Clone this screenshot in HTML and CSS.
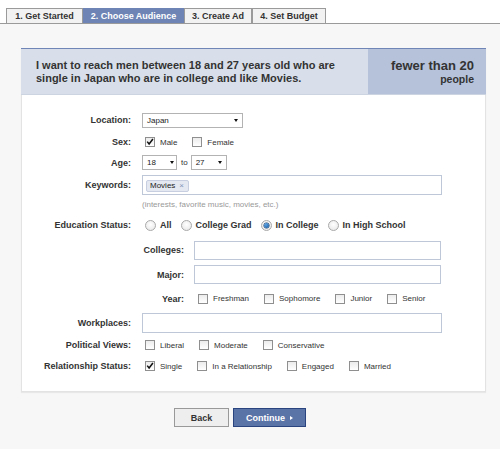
FILE: index.html
```html
<!DOCTYPE html>
<html>
<head>
<meta charset="utf-8">
<link rel="stylesheet" href="styles.css">
</head>
<body>
<div class="tabbar">
  <div class="tab tab-1">1. Get Started</div>
  <div class="tab tab-2 active">2. Choose Audience</div>
  <div class="tab tab-3">3. Create Ad</div>
  <div class="tab tab-4">4. Set Budget</div>
</div>
<main class="page">
  <section class="panel">
    <div class="summary">
      <p class="summary-text">I want to reach men between 18 and 27 years old who are<br>single in Japan who are in college and like Movies.</p>
      <div class="estimate">
        <div class="est-num">fewer than 20</div>
        <div class="est-unit">people</div>
      </div>
    </div>
    <div class="form">
      <div class="row h22">
        <div class="label">Location:</div>
        <div class="field">
          <div class="select sel-loc"><span>Japan</span><i class="arrow"></i></div>
        </div>
      </div>
      <div class="row h22">
        <div class="label">Sex:</div>
        <div class="field options">
          <label class="opt"><span class="cb"><svg viewBox="0 0 10 10" width="10" height="10"><path d="M2.2 4.6 L4.1 7 L7.9 2" fill="none" stroke="#111" stroke-width="1.5"/></svg></span>Male</label>
          <label class="opt"><span class="cb"></span>Female</label>
        </div>
      </div>
      <div class="row h19">
        <div class="label">Age:</div>
        <div class="field">
          <div class="select sel-age1"><span>18</span><i class="arrow"></i></div>
          <span class="to">to</span>
          <div class="select sel-age2"><span>27</span><i class="arrow"></i></div>
        </div>
      </div>
      <div class="row h25">
        <div class="label">Keywords:</div>
        <div class="field">
          <div class="input input-wide"><span class="token">Movies<span class="x">×</span></span></div>
        </div>
      </div>
      <div class="row h15">
        <div class="label"></div>
        <div class="field hint">(interests, favorite music, movies, etc.)</div>
      </div>
      <div class="row h26">
        <div class="label">Education Status:</div>
        <div class="field options">
          <label class="opt ropt"><span class="radio"></span>All</label>
          <label class="opt ropt"><span class="radio"></span>College Grad</label>
          <label class="opt ropt"><span class="radio on"></span>In College</label>
          <label class="opt ropt"><span class="radio"></span>In High School</label>
        </div>
      </div>
      <div class="row h24">
        <div class="label"></div>
        <div class="field">
          <div class="sublabel">Colleges:</div>
          <div class="input input-sub"></div>
        </div>
      </div>
      <div class="row h25">
        <div class="label"></div>
        <div class="field">
          <div class="sublabel">Major:</div>
          <div class="input input-sub"></div>
        </div>
      </div>
      <div class="row h23">
        <div class="label"></div>
        <div class="field">
          <div class="sublabel">Year:</div>
          <div class="suboptions">
            <label class="opt"><span class="cb"></span>Freshman</label>
            <label class="opt"><span class="cb"></span>Sophomore</label>
            <label class="opt"><span class="cb"></span>Junior</label>
            <label class="opt"><span class="cb"></span>Senior</label>
          </div>
        </div>
      </div>
      <div class="row h25">
        <div class="label">Workplaces:</div>
        <div class="field">
          <div class="input input-wide"></div>
        </div>
      </div>
      <div class="row h20">
        <div class="label">Political Views:</div>
        <div class="field options">
          <label class="opt"><span class="cb"></span>Liberal</label>
          <label class="opt"><span class="cb"></span>Moderate</label>
          <label class="opt"><span class="cb"></span>Conservative</label>
        </div>
      </div>
      <div class="row h22">
        <div class="label">Relationship Status:</div>
        <div class="field options">
          <label class="opt"><span class="cb"><svg viewBox="0 0 10 10" width="10" height="10"><path d="M2.2 4.6 L4.1 7 L7.9 2" fill="none" stroke="#111" stroke-width="1.5"/></svg></span>Single</label>
          <label class="opt"><span class="cb"></span>In a Relationship</label>
          <label class="opt"><span class="cb"></span>Engaged</label>
          <label class="opt"><span class="cb"></span>Married</label>
        </div>
      </div>
    </div>
  </section>
  <div class="actions">
    <button class="btn btn-back">Back</button>
    <button class="btn btn-primary">Continue<i class="tri"></i></button>
  </div>
</main>
</body>
</html>
```
FILE: styles.css
```css
html, body {
  margin: 0;
  padding: 0;
}
body {
  background: #f7f7f7;
  font-family: "Liberation Sans", Arial, sans-serif;
  color: #333;
  height: 449px;
  overflow: hidden;
}

/* Tabs */
.tabbar {
  display: flex;
  align-items: flex-end;
  height: 23px;
  padding-left: 6px;
  background: #fff;
  border-bottom: 1px solid #9a9a9a;
}
.tab {
  box-sizing: border-box;
  height: 15px;
  display: flex;
  align-items: center;
  justify-content: center;
  border: 1px solid #9a9a9a;
  border-bottom: 0;
  background: #f2f2f2;
  font-size: 9px;
  font-weight: bold;
  color: #333;
  white-space: nowrap;
}
.tab-1 { width: 77px; }
.tab-2 { width: 101px; }
.tab-3 { width: 68px; }
.tab-4 { width: 74px; }
.tab.active {
  background: #6d84b4;
  border-color: #6d84b4;
  color: #fff;
}

/* Page */
.page {
  padding: 24px 0 0 21px;
}
.panel {
  box-sizing: border-box;
  width: 465px;
  background: #fff;
  border: 1px solid #e3e3e3;
  border-top: 0;
  box-shadow: 0 1px 1px rgba(0, 0, 0, 0.06);
}
.summary {
  box-sizing: border-box;
  display: flex;
  height: 47px;
  margin: 0 -1px;
  border-top: 1px solid #7086b6;
  border-bottom: 1px solid #ccd3e1;
}
.summary-text {
  flex: 1;
  display: flex;
  align-items: center;
  margin: 0;
  padding-left: 15px;
  background: #d8dfea;
  font-size: 11px;
  line-height: 13px;
  font-weight: bold;
  color: #333;
}
.estimate {
  box-sizing: border-box;
  width: 118px;
  padding-right: 12px;
  display: flex;
  flex-direction: column;
  justify-content: center;
  align-items: flex-end;
  background: #b5c2da;
  font-weight: bold;
  color: #333;
}
.est-num {
  font-size: 13px;
  line-height: 15px;
}
.est-unit {
  font-size: 10.5px;
  line-height: 12px;
}

/* Form */
.form {
  padding: 14px 0 14px 0;
}
.row {
  display: flex;
  align-items: center;
}
.h15 { height: 15px; }
.h19 { height: 19px; }
.h20 { height: 20px; }
.h22 { height: 22px; }
.h23 { height: 23px; }
.h24 { height: 24px; }
.h25 { height: 25px; }
.h26 { height: 26px; }

.label {
  width: 109px;
  flex: none;
  text-align: right;
  font-size: 9px;
  font-weight: bold;
  color: #333;
  white-space: nowrap;
}
.field {
  margin-left: 11px;
  display: flex;
  align-items: center;
}
.hint {
  font-size: 8px;
  color: #999;
}
.options,
.suboptions {
  padding-left: 3px;
  display: flex;
  align-items: center;
}
.suboptions {
  padding-left: 4px;
}
.opt {
  display: flex;
  align-items: center;
  margin-right: 15px;
  font-size: 8px;
  color: #333;
  white-space: nowrap;
}
.ropt {
  margin-right: 9px;
  font-size: 9px;
  font-weight: bold;
}
.cb {
  box-sizing: border-box;
  width: 10px;
  height: 10px;
  margin-right: 5px;
  border: 1px solid #8f8f8f;
  background: linear-gradient(#ececec, #fff);
  position: relative;
  flex: none;
}
.cb svg {
  position: absolute;
  left: -1px;
  top: -1px;
}
.radio {
  box-sizing: border-box;
  width: 11px;
  height: 11px;
  margin-right: 4px;
  border: 1px solid #a9a9a9;
  border-radius: 50%;
  background: radial-gradient(circle at 50% 40%, #fff, #e4e4e4);
  display: flex;
  align-items: center;
  justify-content: center;
  flex: none;
}
.radio.on::after {
  content: "";
  width: 5px;
  height: 5px;
  border-radius: 50%;
  background: radial-gradient(circle at 40% 35%, #5fa6e6, #0b4d92);
  box-shadow: 0 0 0 0.5px #1d3f6b;
}

/* Selects */
.select {
  box-sizing: border-box;
  height: 15px;
  display: flex;
  align-items: center;
  justify-content: space-between;
  padding: 0 4px 0 4px;
  border: 1px solid #b3b3b3;
  background: #fff;
  font-size: 8px;
  color: #222;
}
.sel-loc { width: 101px; }
.sel-age1 { width: 35px; padding-right: 2px; }
.sel-age2 { width: 36px; }
.arrow {
  width: 0;
  height: 0;
  border-left: 2.5px solid transparent;
  border-right: 2.5px solid transparent;
  border-top: 3px solid #111;
}
.to {
  margin: 0 3px 0 4px;
  font-size: 8px;
  color: #333;
}

/* Inputs */
.input {
  box-sizing: border-box;
  border: 1px solid #bdc7d8;
  background: #fff;
  display: flex;
  align-items: center;
}
.input-wide {
  width: 300px;
  height: 20px;
}
.input-sub {
  width: 247px;
  height: 19px;
}
.sublabel {
  width: 42px;
  text-align: right;
  margin-right: 10px;
  font-size: 9px;
  font-weight: bold;
  color: #333;
  white-space: nowrap;
}
.token {
  box-sizing: border-box;
  height: 12px;
  margin: 2px 0 0 3px;
  padding: 0 4px 0 3px;
  display: flex;
  align-items: center;
  background: #e3e8f1;
  border: 1px solid #c6cedf;
  border-radius: 2px;
  font-size: 8px;
  color: #222;
}
.x {
  margin-left: 4px;
  font-size: 8px;
  color: #8393b8;
}

/* Buttons */
.actions {
  display: flex;
  gap: 4px;
  margin-top: 16px;
  padding-left: 153px;
}
.btn {
  box-sizing: border-box;
  height: 19px;
  padding: 0;
  display: flex;
  align-items: center;
  justify-content: center;
  font-family: "Liberation Sans", Arial, sans-serif;
  font-size: 9px;
  font-weight: bold;
  border: 1px solid #999;
  cursor: pointer;
}
.btn-back {
  width: 55px;
  background: #eee;
  color: #333;
}
.btn-primary {
  width: 73px;
  background: #5b74a8;
  border-color: #29447e;
  color: #fff;
}
.tri {
  width: 0;
  height: 0;
  margin-left: 5px;
  border-top: 2.5px solid transparent;
  border-bottom: 2.5px solid transparent;
  border-left: 3px solid #fff;
}
```
